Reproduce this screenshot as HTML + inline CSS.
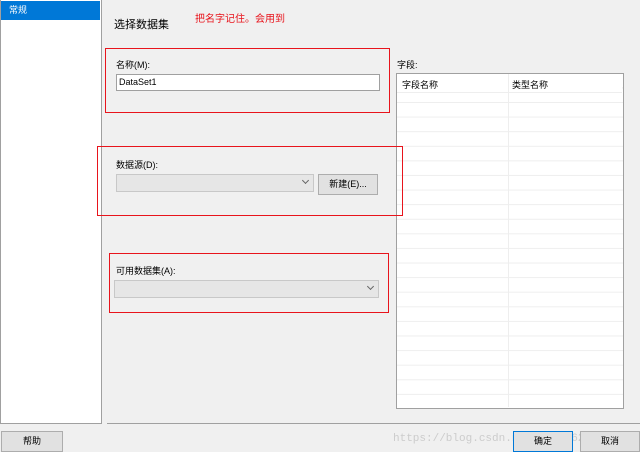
<!DOCTYPE html><html><head><style>
body{margin:0;width:640px;height:452px;background:#f0f0f0;font-family:"Liberation Sans","Noto Sans CJK SC",sans-serif;font-size:9px;color:#000;position:relative;overflow:hidden}
.a{position:absolute}
.red{border:1px solid #e8141c;z-index:5}
.btn{background:#e1e1e1;border:1px solid #adadad;text-align:center;line-height:18px;font-size:9px}
.dd{background:#e6e6e6;border:1px solid #c8c8c8}
.chev{position:absolute;right:5px;top:3px;width:4px;height:4px;border-right:1px solid #666;border-bottom:1px solid #666;transform:rotate(45deg)}
</style></head><body>
<div class="a" style="left:0;top:0;width:100px;height:423px;background:#fff;border:1px solid #a0a0a0;border-top:none"></div>
<div class="a" style="left:1px;top:1px;width:99px;height:19px;background:#0078d7;color:#fff;line-height:19px;padding-left:8px;box-sizing:border-box">常规</div>
<div class="a" style="left:114px;top:16px;font-size:11px">选择数据集</div>
<div class="a" style="left:195px;top:10px;font-size:10px;color:#e8141c">把名字记住。会用到</div>
<div class="a" style="left:397px;top:58px">字段:</div>
<div class="a" style="left:396px;top:73px;width:226px;height:334px;background:#fff;border:1px solid #a0a0a0;background-image:linear-gradient(#eee 1px,transparent 1px);background-size:100% 14.6px;background-position:0 28px"></div>
<div class="a" style="left:397px;top:74px;width:225px;height:18px;background:#fff;border-bottom:1px solid #eee"></div>
<div class="a" style="left:508px;top:74px;width:1px;height:333px;background:#eee"></div>
<div class="a" style="left:402px;top:78px">字段名称</div>
<div class="a" style="left:512px;top:78px">类型名称</div>
<div class="a red" style="left:105px;top:48px;width:283px;height:63px"></div>
<div class="a" style="left:116px;top:58px">名称(M):</div>
<div class="a" style="left:116px;top:74px;width:260px;height:15px;background:#fff;border:1px solid #a0a0a0;line-height:15px;padding-left:2px;box-sizing:content-box">DataSet1</div>
<div class="a red" style="left:97px;top:146px;width:304px;height:68px"></div>
<div class="a" style="left:116px;top:158px">数据源(D):</div>
<div class="a dd" style="left:116px;top:174px;width:196px;height:16px"><div class="chev"></div></div>
<div class="a btn" style="left:318px;top:174px;width:58px;height:19px">新建(E)...</div>
<div class="a red" style="left:109px;top:253px;width:278px;height:58px"></div>
<div class="a" style="left:116px;top:264px">可用数据集(A):</div>
<div class="a dd" style="left:114px;top:280px;width:263px;height:16px"><div class="chev"></div></div>
<div class="a" style="left:107px;top:423px;width:533px;height:1px;background:#a0a0a0"></div>
<div class="a btn" style="left:1px;top:431px;width:60px;height:19px">帮助</div>
<div class="a" style="left:393px;top:433px;font-family:'Liberation Mono',monospace;font-size:11px;color:#ccc">https://blog.csdn.net/qq1016243402</div>
<div class="a btn" style="left:513px;top:431px;width:58px;height:19px;border-color:#0078d7">确定</div>
<div class="a btn" style="left:580px;top:431px;width:58px;height:19px">取消</div>
</body></html>
